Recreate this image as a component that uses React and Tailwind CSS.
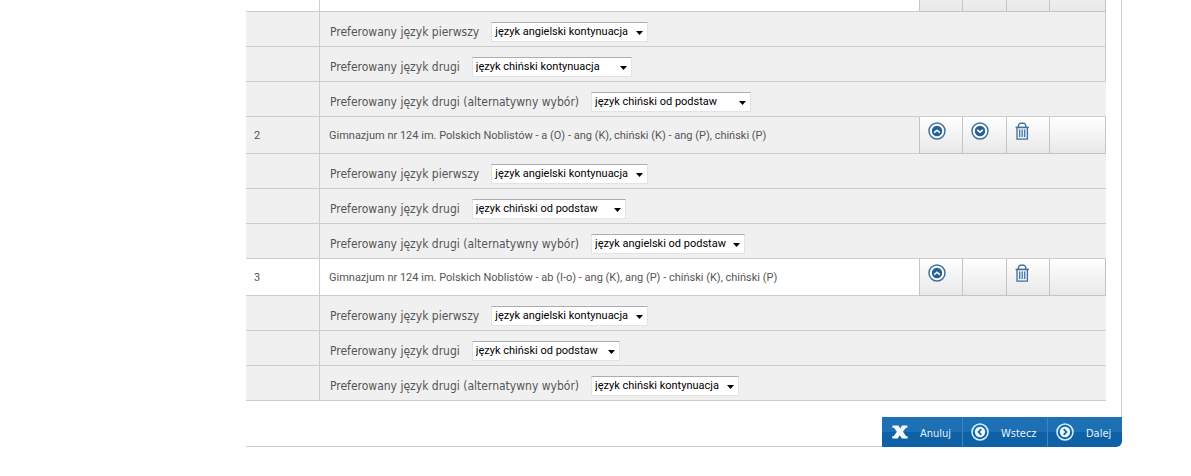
import { useState } from "react";

const NARROW = "w-[148px]";
const MEDIUM = "w-[154px]";
const REGULAR = "w-[157px]";
const WIDE = "w-[160px]";

const FIRST = "Preferowany język pierwszy";
const SECOND = "Preferowany język drugi";
const ALTERNATIVE = "Preferowany język drugi (alternatywny wybór)";

const OPTIONS = [
  "język angielski kontynuacja",
  "język angielski od podstaw",
  "język chiński kontynuacja",
  "język chiński od podstaw",
];

const schools = [
  {
    id: 1,
    partial: true,
    actions: [null, null, null, null],
    languages: [
      { label: FIRST, value: OPTIONS[0], width: REGULAR, edge: true },
      { label: SECOND, value: OPTIONS[2], width: WIDE, edge: true },
      { label: ALTERNATIVE, value: OPTIONS[3], width: WIDE },
    ],
  },
  {
    id: 2,
    name: "Gimnazjum nr 124 im. Polskich Noblistów - a (O) - ang (K), chiński (K) - ang (P), chiński (P)",
    shaded: true,
    actions: ["up", "down", "trash", null],
    languages: [
      { label: FIRST, value: OPTIONS[0], width: REGULAR },
      { label: SECOND, value: OPTIONS[3], width: MEDIUM },
      { label: ALTERNATIVE, value: OPTIONS[1], width: MEDIUM },
    ],
  },
  {
    id: 3,
    name: "Gimnazjum nr 124 im. Polskich Noblistów - ab (I-o) - ang (K), ang (P) - chiński (K), chiński (P)",
    actions: ["up", null, "trash", null],
    languages: [
      { label: FIRST, value: OPTIONS[0], width: REGULAR },
      { label: SECOND, value: OPTIONS[3], width: NARROW },
      { label: ALTERNATIVE, value: OPTIONS[2], width: NARROW },
    ],
  },
];

const actionLabels = { up: "Przesuń w górę", down: "Przesuń w dół", trash: "Usuń" };

function ArrowIcon({ dir }) {
  return (
    <svg className="block size-[18px]" viewBox="0 0 18 18" fill="none">
      <circle cx="9" cy="9" r="8" fill="#f6fbff" stroke="#41709a" strokeWidth="1.5" />
      <circle cx="9" cy="9" r="5.2" fill="#275f93" />
      <path
        d={dir === "up" ? "M6.2 10.6 9 8.2l2.8 2.4" : "M6.2 7.8 9 10.2l2.8-2.4"}
        stroke="#fff"
        strokeWidth="1.6"
      />
    </svg>
  );
}

function TrashIcon() {
  return (
    <svg className="block h-[18px] w-[14px]" viewBox="0 0 14 18" fill="none" stroke="#41709a">
      <path d="M3.5 5V3.2Q4 1.2 5.4 1.2h3.4q1.4 0 1.9 2V5" strokeWidth="1.4" />
      <path d="M2 5.5v11.7h10.4V5.5" fill="#e3f1fd" strokeWidth="1.3" />
      <path d="M.6 5.4h13.2" strokeWidth="1.6" />
      <path d="M4.7 7.5v7.5M7.2 7.5v7.5M9.7 7.5v7.5" strokeWidth="1.2" />
    </svg>
  );
}

function CircleIcon({ dir }) {
  return (
    <svg className="block size-[18px] shrink-0" viewBox="0 0 18 18" fill="none">
      <circle cx="9" cy="9" r="8" stroke="#d5ecfb" strokeWidth="1.6" />
      <circle cx="9" cy="9" r="5.2" fill="#eef8ff" />
      <path
        d={dir === "left" ? "M10.3 6.2 7.6 9l2.7 2.8" : "M7.7 6.2 10.4 9l-2.7 2.8"}
        stroke="#155f9e"
        strokeWidth="1.7"
      />
    </svg>
  );
}

function CrossIcon() {
  return (
    <svg className="block h-[14px] w-4 shrink-0" viewBox="0 0 16 14">
      <path
        fill="#f2faff"
        d="M.4.4h6L8.3 3.4 10 .4h5.4v2.4h-1.5L11 6.8l3.2 4.4h1.4v2.4H9.8L7.8 10.2l-2 3.4H.2v-2.4h1.4L4.9 6.8 2.1 2.8H.4z"
      />
    </svg>
  );
}

function LanguageRow({ id, label, value, width, edge }) {
  const [selected, setSelected] = useState(value);
  return (
    <tr className="h-[35px] bg-[#f0f0f0]">
      <td className="border-r border-b border-[#cdcdcd]" />
      <td colSpan={5} className={`border-b border-[#cdcdcd] pl-[10px] ${edge ? "border-r" : ""}`}>
        <div className="flex items-center gap-3 pt-[6px]">
          <label htmlFor={id} className="text-[12px] leading-[18px] whitespace-nowrap text-[#555]">
            {label}
          </label>
          <div className={`relative ${width}`}>
            <select
              id={id}
              value={selected}
              onChange={(e) => setSelected(e.target.value)}
              className="block h-5 w-full appearance-none border border-[#e3e3e3] border-t-[#abadb3] bg-white pl-[3px] font-[Roboto,sans-serif] text-[11px] leading-[18px] text-black"
            >
              {OPTIONS.map((option) => (
                <option key={option}>{option}</option>
              ))}
            </select>
            <svg className="pointer-events-none absolute top-[9px] right-[5px] h-1 w-[7px]" viewBox="0 0 7 4">
              <path d="M0 0h7L3.5 4z" />
            </svg>
          </div>
        </div>
      </td>
    </tr>
  );
}

function SchoolRow({ school }) {
  const cell = `border-b border-[#cdcdcd] pt-[2px] font-[Roboto,sans-serif] text-[11px] leading-4 text-[#555] ${school.shaded ? "bg-[#f0f0f0]" : "bg-white"}`;
  return (
    <tr className={school.partial ? "h-3" : "h-[37px]"}>
      <td className={`${cell} border-r pl-2`}>{school.partial ? null : school.id}</td>
      <td className={`${cell} pl-[9px]`}>{school.name}</td>
      {school.actions.map((action, i) => (
        <td
          key={i}
          className={`border-b border-l border-[#c4c4c4] bg-linear-to-b to-[#e8e8e8] align-top last:border-r ${school.partial ? "from-[#eee]" : "from-white"}`}
        >
          {action && (
            <button type="button" aria-label={actionLabels[action]} className="ml-2 block cursor-pointer pt-[5px]">
              {action === "trash" ? <TrashIcon /> : <ArrowIcon dir={action} />}
            </button>
          )}
        </td>
      ))}
    </tr>
  );
}

export default function App() {
  return (
    <div className="bg-white pr-[69px] pl-[246px] font-['DejaVu_Sans_Condensed','DejaVu_Sans',sans-serif]">
      <main className="rounded-br-md border-r border-b border-[#cdcdcd]">
        <div className="pr-[15px]">
          <table className="w-full table-fixed border-separate border-spacing-0">
            <colgroup>
              <col className="w-[74px]" />
              <col />
              <col className="w-[43px]" />
              <col className="w-[44px]" />
              <col className="w-[43px]" />
              <col className="w-[57px]" />
            </colgroup>
            {schools.map((school) => (
              <tbody key={school.id}>
                <SchoolRow school={school} />
                {school.languages.map((language, i) => (
                  <LanguageRow key={i} id={`language-${school.id}-${i}`} {...language} />
                ))}
              </tbody>
            ))}
          </table>
        </div>

        <div className="mt-4 -mr-px -mb-px flex justify-end">
          <div className="flex h-[30px] overflow-hidden rounded-br-md bg-linear-to-b from-[#1c70b3] from-50% to-[#0f61a5] to-50% text-[11px] leading-4 text-[#eaf5fd]">
            <button type="button" className="flex w-20 cursor-pointer items-center gap-3 pl-[10px]">
              <CrossIcon />
              <span className="pt-1">Anuluj</span>
            </button>
            <button type="button" className="flex w-[85px] cursor-pointer items-center gap-3 border-l border-[#3b86bf] pl-2">
              <CircleIcon dir="left" />
              <span className="pt-1">Wstecz</span>
            </button>
            <button type="button" className="flex w-[75px] cursor-pointer items-center gap-3 border-l border-[#3b86bf] pl-2">
              <CircleIcon dir="right" />
              <span className="pt-1">Dalej</span>
            </button>
          </div>
        </div>
      </main>
    </div>
  );
}
